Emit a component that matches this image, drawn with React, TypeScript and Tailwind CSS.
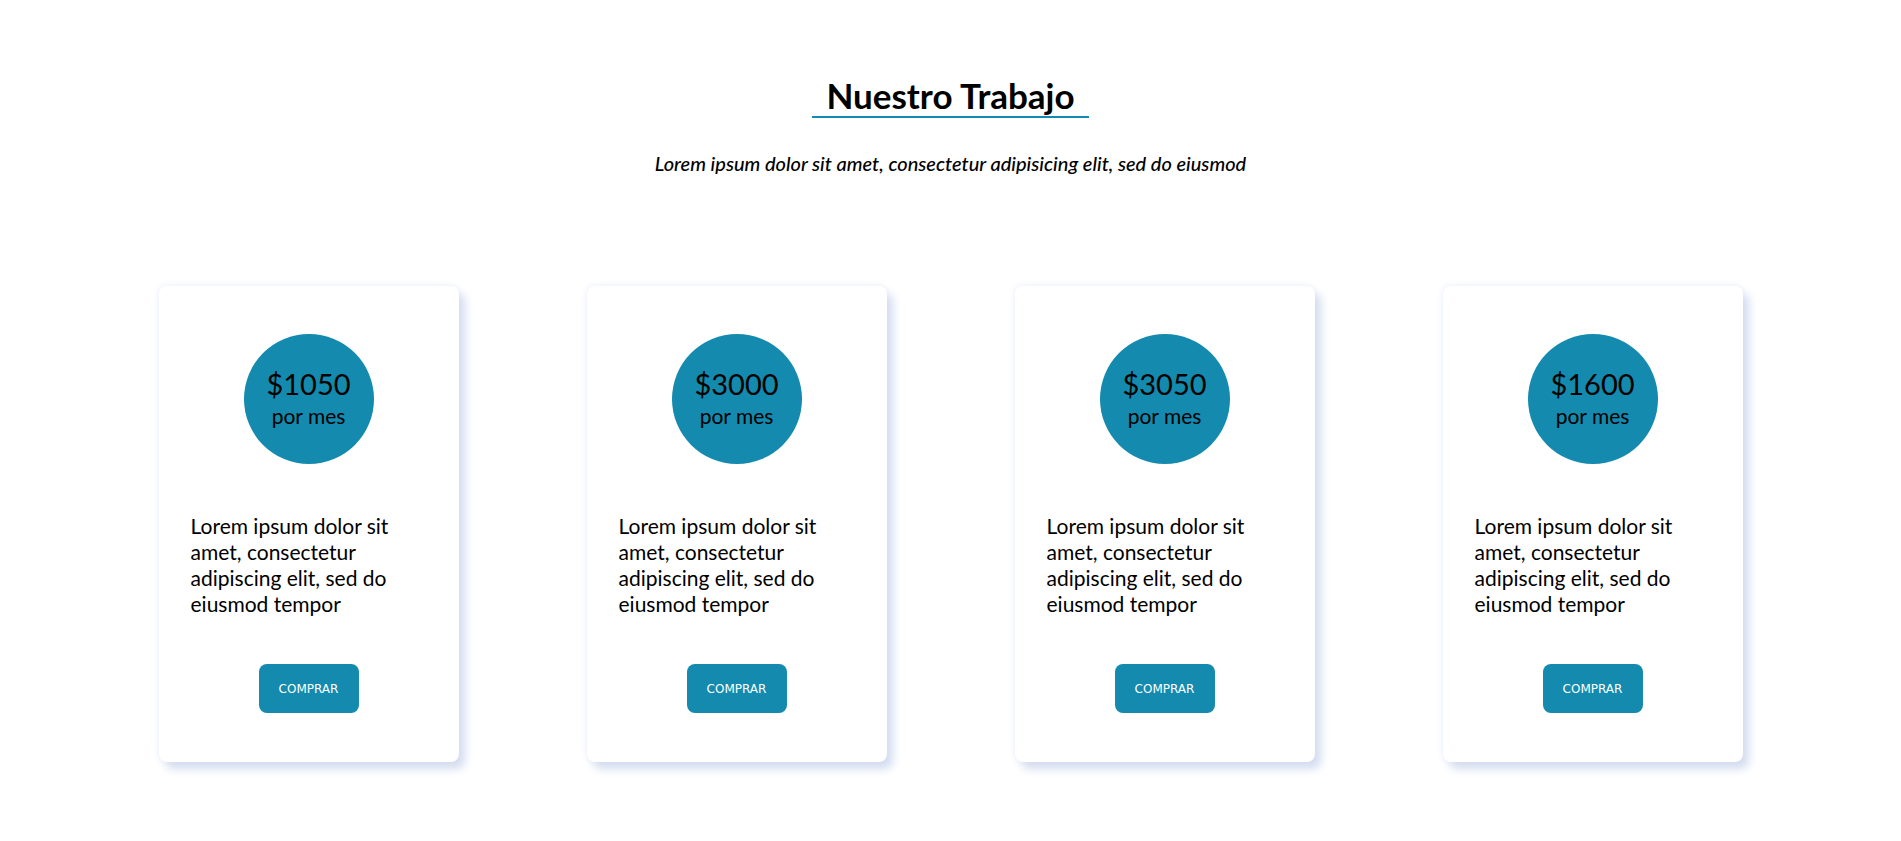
import React from "react";

const plans = ["$1050", "$3000", "$3050", "$1600"];

function Card({ price }: { price: string }) {
  return (
    <div className="flex w-[300px] h-[476px] flex-col items-center rounded-[8px] bg-white pt-[48px] shadow-[6px_7px_10px_#d3dcef,-1px_-1px_6px_#eef1f9]">
      <div className="flex h-[130px] w-[130px] flex-col items-center rounded-full bg-[#138aae] pt-[32px] text-black">
        <div className="text-[29px] leading-[36px]">{price}</div>
        <div className="mt-[1px] text-[21px] leading-[26px]">por mes</div>
      </div>
      <p className="mt-[49px] w-[236px] text-[21px] leading-[26px] text-black">
        Lorem ipsum dolor sit amet, consectetur adipiscing elit, sed do eiusmod tempor
      </p>
      <button className="mt-[47px] h-[49px] w-[100px] rounded-[8px] bg-[#138aae] text-[12px] text-white [font-family:'DejaVu_Sans',sans-serif]">
        COMPRAR
      </button>
    </div>
  );
}

export default function App() {
  return (
    <div className="min-h-[841px] w-full bg-white [font-family:Lato,'Noto_Sans',sans-serif]">
      <div className="flex flex-col items-center pt-[75px]">
        <h2 className="border-b-2 border-[#138aae] px-[14px] text-[35px] font-bold leading-[41px] text-black">
          Nuestro Trabajo
        </h2>
        <p className="mt-[31px] text-[20px] leading-[28px] italic font-medium text-black">
          Lorem ipsum dolor sit amet, consectetur adipisicing elit, sed do eiusmod
        </p>
      </div>
      <div className="mt-[109px] flex justify-center gap-[128px]">
        {plans.map((p) => (
          <Card key={p} price={p} />
        ))}
      </div>
    </div>
  );
}
